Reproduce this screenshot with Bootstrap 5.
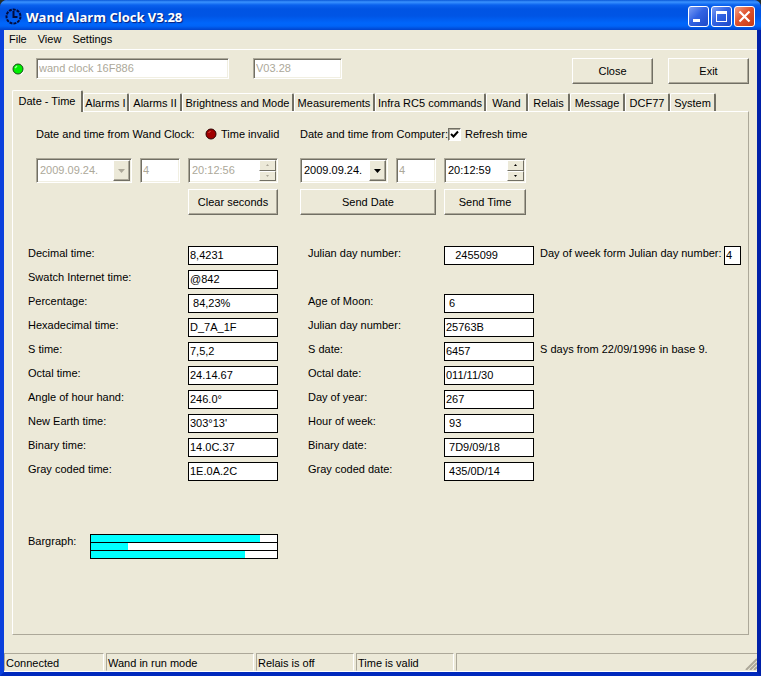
<!DOCTYPE html>
<html lang="en">
<head>
<meta charset="utf-8">
<meta name="viewport" content="width=device-width, initial-scale=1">
<title>Wand Alarm Clock V3.28</title>
<link href="https://cdn.jsdelivr.net/npm/bootstrap@5.3.0/dist/css/bootstrap.min.css" rel="stylesheet">
<style>
:root { --face: #ece9d8; --shade: #aca899; --dark: #716f64; }
body { background: #26302a; color: #000; font: 11px/14px "Liberation Sans", Arial, sans-serif; }
input, select, button { font: inherit; color: inherit; border-radius: 0; }
.app-window { background: var(--face); border: 4px solid; border-top: 0; border-color: #0a3fdc #0020a8 #0029bd #0a3fdc; border-radius: 7px 7px 0 0; }
.title-strip { height: 30px; margin: 0 -4px; padding: 3px 6px 0 5px; border-radius: 7px 7px 0 0;
  background: linear-gradient(#0958d8 0, #3a93ff 2px, #0a62ee 5px, #0054e3 9px, #0055e5 16px, #0066fb 23px, #0064f8 26px, #0043cc 30px); }
.title-strip h1 { font: bold 13px/16px "Open Sans", sans-serif; color: #fff; text-shadow: 1px 1px 1px #0a1f7a; }
.caption-set { gap: 2px; }
.caption-btn { width: 21px; height: 21px; padding: 0; border: 1px solid #fff; border-radius: 3px; background: linear-gradient(135deg, #7c9ef5, #3263e3 45%, #1d49c8); }
.caption-btn.quit { background: linear-gradient(135deg, #f0a088, #e0532d 45%, #c33a14); }
.caption-btn svg, .app-icon { display: block; }
.menu-strip { height: 20px; border-bottom: 1px solid #fff; padding: 0 5px 1px; gap: 11px; }
.menu-strip a { color: #000; text-decoration: none; }
.tool-row { padding: 8px 8px 0 8px; height: 40px; }
.lamp { display: block; }
.sunken { height: 21px; min-width: 0; padding: 0 2px 2px; background: #fff; border: 1px solid; border-color: var(--shade) #fff #fff var(--shade); box-shadow: inset 1px 1px 0 var(--dark), inset -1px -1px 0 #f1efe2; }
.sunken.tall { height: 25px; padding: 0 2px 2px; }
.sunken:disabled { color: var(--shade); }
.name-box { width: 193px; }
.version-box { width: 89px; }
.raised { min-height: 26px; padding: 0 4px; background: var(--face); border: 1px solid; border-color: #fff var(--dark) var(--dark) #fff; box-shadow: inset -1px -1px 0 var(--shade); }
.wide-btn { width: 81px; }
.tool-row .me-auto + .wide-btn { margin-right: 15px; }
.tab-strip { display: grid; grid-template-columns: 71px 46px 53px 112px 81px 111px 42px 42px 55px 45px 46px; align-items: end; margin: 0 8px; border: 0; }
.tab-strip .nav-link, .tab-strip .nav-link.active { width: 100%; height: 18px; margin: 0; padding: 1px 0 0; white-space: nowrap; color: #000; border: 1px solid; border-width: 1px 2px 0 1px; border-color: #fff var(--dark) #fff #fff; border-radius: 2px 2px 0 0; background: var(--face); }
.tab-strip .nav-link.active { height: 22px; padding-bottom: 2px; margin-bottom: -1px; position: relative; }
.page-panel { margin: 0 8px 18px; border: 1px solid; border-color: #fff var(--shade) var(--shade) #fff; padding: 15px 7px 70px 15px; }
.clock-grid { display: grid; grid-template-columns: 96px 40px 104px 88px 40px 82px; column-gap: 8px; padding-left: 8px; align-items: start; }
.half { width: 90px; }
.gap-head { min-height: 31px; grid-column: span 3; }
.from-label { width: 165px; }
.clear-btn { grid-column: 3; }
.send-date { grid-column: 4 / 6; }
.clock-grid > .raised { margin-top: 6px; }
.check-box { appearance: none; width: 13px; height: 13px; margin: 0; border: 1px solid; border-color: var(--dark) #fff #fff var(--dark); box-shadow: inset 1px 1px 0 var(--shade); background: #fff; }
.check-wrap { display: grid; margin-top: 1px; }
.check-wrap > * { grid-area: 1 / 1; place-self: center; pointer-events: none; }
.check-wrap > input { pointer-events: auto; }
.check-wrap > input:not(:checked) + svg { display: none; }
.sunken select, .sunken input { appearance: none; flex: 1 1 0; width: 0; min-width: 0; border: 0; padding: 0 2px 2px; background: transparent; opacity: 1; }
.sunken select:disabled, .sunken input:disabled { color: var(--shade); }
.sunken.combo { padding: 1px; }
.drop-face { width: 17px; border: 1px solid; border-color: #fff var(--dark) var(--dark) #fff; box-shadow: inset -1px -1px 0 var(--shade); background: var(--face); }
.spin-face { flex: 1 1 0; width: 17px; padding: 0; border: 1px solid; border-color: #fff var(--dark) var(--dark) #fff; background: var(--face); }
.spin-face svg, .drop-face svg { display: block; margin: auto; }
.value-grid { display: grid; grid-template-columns: 160px 90px 166px 90px minmax(0, 1fr); grid-auto-rows: 24px; margin-top: 31px; align-items: start; }
.value-grid > .first { grid-column: 1; }
.value-grid > .second { padding-left: 30px; grid-column: 3; }
.value-box { width: 90px; height: 19px; padding: 0 1px 1px; border: 1px solid #000; background: #fff; }
.note { padding-left: 6px; white-space: nowrap; }
.day-box { width: 17px; }
.bar-label { width: 62px; }
.bar-set { width: 188px; border: 1px solid #000; border-bottom: 0; background: #fff; }
.bar-line { height: 8px; border-bottom: 1px solid #000; }
.bar-fill { height: 100%; background: #0ff; }
.status-strip { display: grid; grid-template-columns: 100px 148px 98px 98px minmax(0, 1fr); column-gap: 2px; height: 19px; border-bottom: 1px solid #fff; }
.status-strip > div { border: 1px solid; border-color: var(--shade) #fff var(--face) var(--shade); padding: 2px 1px 0; white-space: nowrap; }
.status-strip > .grip-cell { border-right: 0; padding: 0; }
</style>
</head>
<body>
<div class="app-window d-flex flex-column min-vh-100">
  <header class="title-strip d-flex align-items-center">
    <svg class="app-icon me-1" width="17" height="17" viewBox="0 0 17 17" aria-hidden="true"><circle cx="8.500" cy="8.500" r="7" fill="none" stroke="#030c3c" stroke-width="2" stroke-dasharray="3 1"/><path d="M8.500 3v6h4" fill="none" stroke="#030c3c" stroke-width="2"/></svg>
    <h1 class="m-0 me-auto">Wand Alarm Clock V3.28</h1>
    <div class="caption-set d-flex">
      <button class="caption-btn" type="button" aria-label="Minimize"><svg width="19" height="19"><path d="M4 12h7v3H4z" fill="#fff"/></svg></button>
      <button class="caption-btn" type="button" aria-label="Maximize"><svg width="19" height="19"><path d="M4 4h11v11H4zM5 7v7h9V7z" fill="#fff" fill-rule="evenodd"/></svg></button>
      <button class="caption-btn quit" type="button" aria-label="Close window"><svg width="19" height="19"><path d="M4.500 4.500l10 10m0-10l-10 10" stroke="#fff" stroke-width="2.200"/></svg></button>
    </div>
  </header>
  <nav class="menu-strip d-flex align-items-center" aria-label="Menu"><a href="#">File</a><a href="#">View</a><a href="#">Settings</a></nav>

  <div class="tool-row d-flex align-items-start">
    <svg class="lamp mt-1 me-2" width="12" height="14" aria-label="Link active"><path d="M8.500 12.500a6 6 0 0 0 3-5" fill="none" stroke="#fff" stroke-width="1.500"/><circle cx="6" cy="7" r="5" fill="#00f000" stroke="#174b17"/><path d="M3 6l2-2" stroke="#9f9" stroke-width="1.500"/></svg>
    <input class="sunken name-box ms-1 me-4" aria-label="Device name" value="wand clock 16F886" disabled>
    <input class="sunken version-box me-auto" aria-label="Firmware version" value="V03.28" disabled>
    <button class="raised wide-btn" type="button">Close</button>
    <button class="raised wide-btn" type="button">Exit</button>
  </div>

  <ul class="nav nav-tabs tab-strip" role="tablist">
    <li><button class="nav-link active" type="button" role="tab" aria-selected="true">Date - Time</button></li>
    <li><button class="nav-link" type="button" role="tab">Alarms I</button></li>
    <li><button class="nav-link" type="button" role="tab">Alarms II</button></li>
    <li><button class="nav-link" type="button" role="tab">Brightness and Mode</button></li>
    <li><button class="nav-link" type="button" role="tab">Measurements</button></li>
    <li><button class="nav-link" type="button" role="tab">Infra RC5 commands</button></li>
    <li><button class="nav-link" type="button" role="tab">Wand</button></li>
    <li><button class="nav-link" type="button" role="tab">Relais</button></li>
    <li><button class="nav-link" type="button" role="tab">Message</button></li>
    <li><button class="nav-link" type="button" role="tab">DCF77</button></li>
    <li><button class="nav-link" type="button" role="tab">System</button></li>
  </ul>

  <main class="page-panel flex-grow-1">
    <div class="clock-grid">
      <div class="gap-head d-flex align-items-start text-nowrap">
        <span class="from-label">Date and time from Wand Clock:</span>
        <span class="d-flex align-items-center gap-1 ms-1"><svg class="lamp" width="12" height="12" aria-hidden="true"><circle cx="6" cy="6" r="5" fill="#a00000" stroke="#2c0000"/><path d="M3.500 5l2-2" stroke="#e06050"/></svg>Time invalid</span>
      </div>
      <div class="gap-head d-flex align-items-start text-nowrap">
        <span>Date and time from Computer:</span>
        <span class="check-wrap"><input class="check-box" type="checkbox" id="refresh" checked><svg width="9" height="9"><path d="M1 4l2.500 2.500L8 1.500" fill="none" stroke="#000" stroke-width="2"/></svg></span>
        <label class="ms-1" for="refresh">Refresh time</label>
      </div>

      <div class="sunken tall combo d-flex">
        <select aria-label="Clock date" disabled><option>2009.09.24.</option></select>
        <span class="drop-face d-flex" aria-hidden="true"><svg width="7" height="4"><path d="M0 0h7L3.500 4z" fill="#aca899"/></svg></span>
      </div>
      <input class="sunken tall" aria-label="Clock day of week" value="4" disabled>
      <div class="sunken tall combo half d-flex">
        <input aria-label="Clock time" value="20:12:56" disabled>
        <div class="d-flex flex-column">
          <button class="spin-face" type="button" aria-label="Increase clock time" disabled><svg width="3" height="2"><path d="M0 2h3L1.500 0z" fill="#aca899"/></svg></button>
          <button class="spin-face" type="button" aria-label="Decrease clock time" disabled><svg width="3" height="2"><path d="M0 0h3L1.500 2z" fill="#aca899"/></svg></button>
        </div>
      </div>
      <div class="sunken tall combo d-flex">
        <select aria-label="Computer date"><option>2009.09.24.</option></select>
        <span class="drop-face d-flex" aria-hidden="true"><svg width="7" height="4"><path d="M0 0h7L3.500 4z"/></svg></span>
      </div>
      <input class="sunken tall" aria-label="Computer day of week" value="4" disabled>
      <div class="sunken tall combo d-flex">
        <input aria-label="Computer time" value="20:12:59">
        <div class="d-flex flex-column">
          <button class="spin-face" type="button" aria-label="Increase computer time"><svg width="3" height="2"><path d="M0 2h3L1.500 0z"/></svg></button>
          <button class="spin-face" type="button" aria-label="Decrease computer time"><svg width="3" height="2"><path d="M0 0h3L1.500 2z"/></svg></button>
        </div>
      </div>

      <button class="raised half clear-btn" type="button">Clear seconds</button>
      <button class="raised send-date" type="button">Send Date</button>
      <button class="raised" type="button">Send Time</button>
    </div>

    <div class="value-grid">
      <label class="first" for="v1">Decimal time:</label><input class="value-box" id="v1" value="8,4231" readonly>
      <label class="second" for="d1">Julian day number:</label><input class="value-box" id="d1" value="   2455099" readonly>
      <div class="note d-flex justify-content-between"><label for="dw">Day of week form Julian day number:</label><input class="value-box day-box" id="dw" value="4" readonly></div>
      <label class="first" for="v2">Swatch Internet time:</label><input class="value-box" id="v2" value="@842" readonly>
      <label class="first" for="v3">Percentage:</label><input class="value-box" id="v3" value=" 84,23%" readonly>
      <label class="second" for="d3">Age of Moon:</label><input class="value-box" id="d3" value=" 6" readonly>
      <label class="first" for="v4">Hexadecimal time:</label><input class="value-box" id="v4" value="D_7A_1F" readonly>
      <label class="second" for="d4">Julian day number:</label><input class="value-box" id="d4" value="25763B" readonly>
      <label class="first" for="v5">S time:</label><input class="value-box" id="v5" value="7,5,2" readonly>
      <label class="second" for="d5">S date:</label><input class="value-box" id="d5" value="6457" readonly>
      <span class="note">S days from 22/09/1996 in base 9.</span>
      <label class="first" for="v6">Octal time:</label><input class="value-box" id="v6" value="24.14.67" readonly>
      <label class="second" for="d6">Octal date:</label><input class="value-box" id="d6" value="011/11/30" readonly>
      <label class="first" for="v7">Angle of hour hand:</label><input class="value-box" id="v7" value="246.0°" readonly>
      <label class="second" for="d7">Day of year:</label><input class="value-box" id="d7" value="267" readonly>
      <label class="first" for="v8">New Earth time:</label><input class="value-box" id="v8" value="303°13'" readonly>
      <label class="second" for="d8">Hour of week:</label><input class="value-box" id="d8" value=" 93" readonly>
      <label class="first" for="v9">Binary time:</label><input class="value-box" id="v9" value="14.0C.37" readonly>
      <label class="second" for="d9">Binary date:</label><input class="value-box" id="d9" value=" 7D9/09/18" readonly>
      <label class="first" for="v10">Gray coded time:</label><input class="value-box" id="v10" value="1E.0A.2C" readonly>
      <label class="second" for="d10">Gray coded date:</label><input class="value-box" id="d10" value=" 435/0D/14" readonly>
    </div>

    <div class="d-flex mt-5">
      <span class="bar-label">Bargraph:</span>
      <div class="bar-set">
        <div class="bar-line"><div class="bar-fill" style="width: 91%"></div></div>
        <div class="bar-line"><div class="bar-fill" style="width: 20%"></div></div>
        <div class="bar-line"><div class="bar-fill" style="width: 83%"></div></div>
      </div>
    </div>
  </main>

  <footer class="status-strip">
    <div>Connected</div><div>Wand in run mode</div><div>Relais is off</div><div>Time is valid</div>
    <div class="grip-cell d-flex justify-content-end align-items-end"><svg width="12" height="12" aria-hidden="true"><path d="M1 12L12 1M5 12l7-7M9 12l3-3" stroke="#aca899" stroke-width="2"/></svg></div>
  </footer>
</div>
<script src="https://cdn.jsdelivr.net/npm/bootstrap@5.3.0/dist/js/bootstrap.bundle.min.js"></script>
</body>
</html>
